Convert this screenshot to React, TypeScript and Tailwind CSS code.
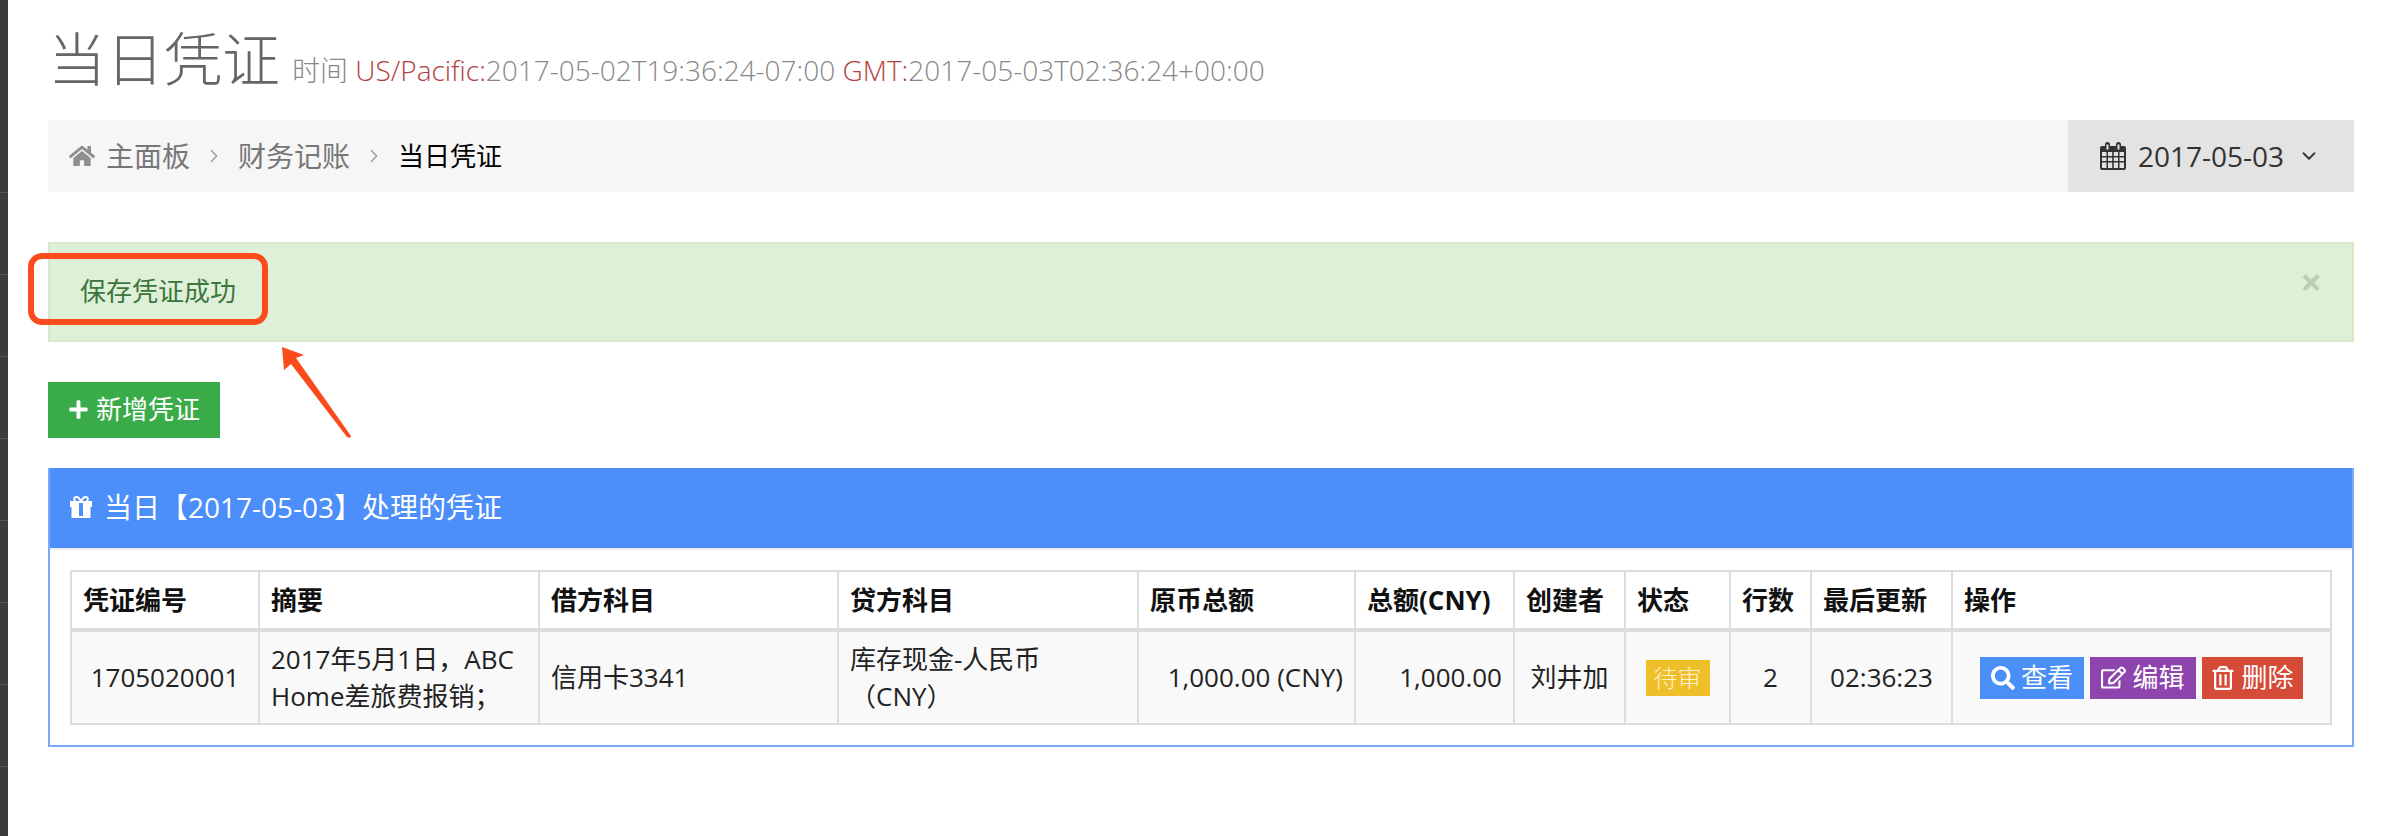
import React from 'react';
import { ChevronDown, ChevronRight } from 'lucide-react';
import { FaHome, FaPlus, FaRegEdit, FaRegTrashAlt, FaSearch } from 'react-icons/fa';

const sideItems = ['h-[193px]', 'h-[82px]', 'h-[82px]', 'h-[82px]', 'h-[82px]', 'h-[82px]', 'h-[82px]', 'h-[82px]', 'h-[69px]'];

const columns = [
  { title: '凭证编号', width: 188 },
  { title: '摘要', width: 280 },
  { title: '借方科目', width: 299 },
  { title: '贷方科目', width: 300 },
  { title: '原币总额', width: 217 },
  { title: '总额(CNY)', width: 159 },
  { title: '创建者', width: 111 },
  { title: '状态', width: 105 },
  { title: '行数', width: 81 },
  { title: '最后更新', width: 141 },
  { title: '操作', width: 379 },
];

const CalendarIcon: React.FC = () => (
  <svg width="26" height="28" viewBox="0 0 26 28" className="text-[#333]" fill="currentColor">
    <path
      fillRule="evenodd"
      d="M2 4h3V2.5a2.5 2.5 0 0 1 5 0V4h6V2.5a2.5 2.5 0 0 1 5 0V4h3a2 2 0 0 1 2 2v20a2 2 0 0 1-2 2H2a2 2 0 0 1-2-2V6a2 2 0 0 1 2-2zM2 10v4h4.500v-4zm6 0v4h4.200v-4zm5.800 0v4h4.200v-4zm5.700 0v4H24v-4zM2 15.500V19h4.500v-3.500zm6 0V19h4.200v-3.500zm5.800 0V19h4.200v-3.500zm5.700 0V19H24v-3.500zM2 20.500V26h4.500v-5.500zm6 0V26h4.200v-5.500zm5.800 0V26h4.200v-5.500zm5.700 0V26H24v-5.500z"
    />
    <path d="M6.500 2.500h2v5h-2zM17.500 2.500h2v5h-2z" fill="#e3e3e3" />
  </svg>
);

const GiftIcon: React.FC = () => (
  <svg width="22" height="22" viewBox="0 0 22 22" fill="white">
    <path
      fillRule="evenodd"
      d="M6.500 0C8.500 0 10 1.700 11 3.600 12 1.700 13.500 0 15.500 0 17.500 0 18.800 1.300 18.800 3c0 .8-.3 1.500-.8 2H22v6h-1.500v11h-19V11H0V5h4a3 3 0 0 1-.8-2C3.200 1.300 4.500 0 6.500 0zM6.500 2C5.700 2 5.200 2.400 5.200 3S5.700 5 6.500 5h3C9 3.600 7.800 2 6.500 2zm9 0c-1.300 0-2.500 1.600-3 3h3c.8 0 1.300-1.400 1.300-2s-.5-1-1.300-1zM9 7v13h4V7z"
    />
  </svg>
);

export default function App() {
  return (
    <div className="relative flex h-[836px] overflow-hidden bg-white font-['Open_Sans','Noto_Sans_CJK_SC',sans-serif] text-[26px] leading-[37px] text-[#333]">
      <div className="w-2 shrink-0 bg-[#3c3c3c]">
        {sideItems.map((h, i) => (
          <div key={i} className={`${h} border-b border-[#555] last:border-b-0`} />
        ))}
      </div>

      <div className="min-w-0 flex-1 pl-10 pr-7">
        <div className="flex h-[120px] items-baseline pt-[23px]">
          <h1 className="text-[58px] leading-[72px] font-light text-[#666]">当日凭证</h1>
          <span className="ml-[12px] text-[28px] font-light text-[#888]">
            时间 <span className="text-[#b0403e]">US/Pacific:</span>2017-05-02T19:36:24-07:00{' '}
            <span className="text-[#b0403e]">GMT:</span>2017-05-03T02:36:24+00:00
          </span>
        </div>

        <div className="flex h-[72px] items-center justify-between bg-[#f6f6f6]">
          <div className="flex items-center pl-[21px] text-[#777]">
            <FaHome className="mr-[11px] text-[26px] text-[#8f8f8f]" />
            <span className="text-[28px]">主面板</span>
            <ChevronRight className="mx-[13px] size-[22px] text-[#999]" strokeWidth={1.5} />
            <span className="text-[28px]">财务记账</span>
            <ChevronRight className="mx-[13px] size-[22px] text-[#999]" strokeWidth={1.5} />
            <span className="text-black">当日凭证</span>
          </div>
          <div className="flex h-full w-[286px] items-center bg-[#e3e3e3] pl-8 text-[28px]">
            <CalendarIcon />
            <span className="ml-3">2017-05-03</span>
            <ChevronDown className="ml-[14px] size-[22px]" strokeWidth={2} />
          </div>
        </div>

        <div className="mt-[50px] flex h-[100px] items-center justify-between border-2 border-[#d6e9c6] bg-[#dff0d8] pl-[30px] pr-[30px] text-[#3c763d]">
          <span className="mb-[2px]">保存凭证成功</span>
          <span className="mb-[22px] text-[38px] leading-none font-bold text-[#bccdb6]">×</span>
        </div>

        <button className="mt-10 flex h-14 w-[172px] items-center bg-[#3aab49] pb-[2px] pl-5 text-white">
          <FaPlus className="mr-[7px] text-[21px]" />
          新增凭证
        </button>

        <div className="mt-[30px] h-[279px] border-2 border-t-0 border-[#7ba8f8]">
          <div className="flex h-[82px] items-center border-b-2 border-[#eee] bg-[#4c8efa] pb-[2px] pl-5 text-[28px] text-white">
            <span className="mr-3">
              <GiftIcon />
            </span>
            当日【2017-05-03】处理的凭证
          </div>
          <div className="pt-5 pl-5">
            <table className="w-[2260px] table-fixed border-collapse">
              <colgroup>
                {columns.map((c) => (
                  <col key={c.title} style={{ width: c.width }} />
                ))}
              </colgroup>
              <thead>
                <tr className="h-[59px]">
                  {columns.map((c) => (
                    <th key={c.title} className="border-2 border-b-4 border-[#ddd] px-[11px] text-left font-bold whitespace-nowrap text-[#111]">
                      {c.title}
                    </th>
                  ))}
                </tr>
              </thead>
              <tbody>
                <tr className="h-[94px] bg-[#f9f9f9] text-[#222]">
                  <td className="border-2 border-[#ddd] px-[11px] text-center">1705020001</td>
                  <td className="border-2 border-[#ddd] px-[11px]">2017年5月1日，ABC Home差旅费报销；</td>
                  <td className="border-2 border-[#ddd] px-[11px]">信用卡3341</td>
                  <td className="border-2 border-[#ddd] px-[11px]">库存现金-人民币（CNY）</td>
                  <td className="border-2 border-[#ddd] px-[11px] text-right">1,000.00 (CNY)</td>
                  <td className="border-2 border-[#ddd] px-[11px] text-right">1,000.00</td>
                  <td className="border-2 border-[#ddd] px-[11px] text-center whitespace-nowrap">刘井加</td>
                  <td className="border-2 border-[#ddd] text-center">
                    <span className="inline-block h-9 w-16 bg-[#efbf2a] text-[24px] leading-9 font-light text-[#fdf3d0]">待审</span>
                  </td>
                  <td className="border-2 border-[#ddd] text-center">2</td>
                  <td className="border-2 border-[#ddd] text-center">02:36:23</td>
                  <td className="border-2 border-[#ddd]">
                    <div className="flex justify-center gap-[6px] text-white">
                      <span className="flex h-[42px] w-[104px] items-center justify-center gap-[6px] bg-[#4a8ef7]">
                        <FaSearch className="text-[24px]" />
                        查看
                      </span>
                      <span className="flex h-[42px] w-[106px] items-center justify-center gap-[6px] bg-[#8e44ad]">
                        <FaRegEdit className="text-[25px]" />
                        编辑
                      </span>
                      <span className="flex h-[42px] w-[101px] items-center justify-center gap-[6px] bg-[#d64a38]">
                        <FaRegTrashAlt className="text-[24px]" />
                        删除
                      </span>
                    </div>
                  </td>
                </tr>
              </tbody>
            </table>
          </div>
        </div>
      </div>

      {/* hand-drawn annotation on top of the page */}
      <div className="absolute top-[253px] left-[28px] h-[72px] w-[240px] rounded-[14px] border-[6px] border-[#fb4a1c]" />
      <svg className="absolute top-[345px] left-[280px]" width="74" height="96" viewBox="0 0 74 96">
        <polygon points="2,2 24,10 16,13 71,91 70,93 67,92 11,19 4,25" fill="#fb4a1c" />
      </svg>
    </div>
  );
}
